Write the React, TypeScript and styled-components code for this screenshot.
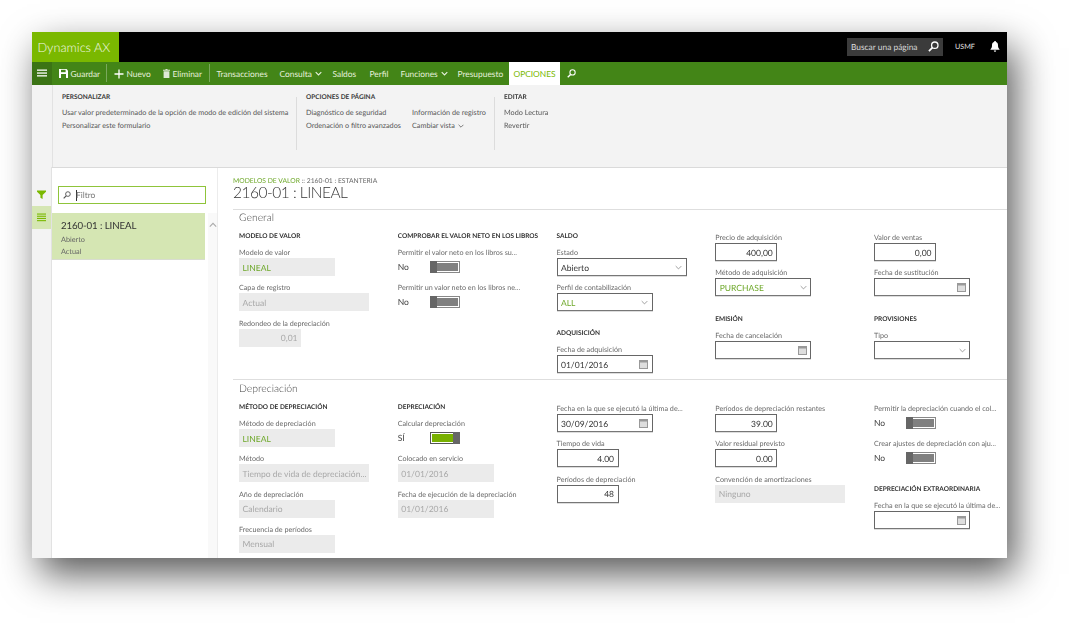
import React from "react";
import styled, { createGlobalStyle } from "styled-components";

const Global = createGlobalStyle`
  html, body { margin: 0; padding: 0; background: #fff; }
  body {
    font-family: Lato, "Open Sans", "Liberation Sans", sans-serif;
    text-rendering: geometricPrecision;
  }
  * { box-sizing: border-box; }
`;

const Page = styled.div`
  width: 1072px;
  height: 623px;
  padding: 32px 65px 65px 32px;
  overflow: hidden;
`;
const Win = styled.div`
  width: 975px;
  height: 526px;
  overflow: hidden;
  background: #fff;
  box-shadow: 8px 16px 36px rgba(0, 0, 0, 0.66);
  display: flex;
  flex-direction: column;
`;
const Crisp = styled.div`
  filter: blur(0.3px);
  display: flex;
  flex-direction: column;
  height: 100%;
`;

/* top bar */
const TopBar = styled.header`
  height: 29.5px;
  flex: none;
  background: #000;
  display: flex;
  align-items: center;
`;
const Logo = styled.div`
  width: 87px;
  height: 100%;
  background: #7ab800;
  color: #f4f9e8;
  font-size: 12.7px;
  font-weight: 300;
  line-height: 31px;
  padding-left: 5.5px;
`;
const SearchBox = styled.div`
  margin-left: auto;
  width: 96px;
  height: 18px;
  background: #3b3b3b;
  color: #d8d8d8;
  font-size: 8.4px;
  display: flex;
  align-items: center;
  justify-content: space-between;
  padding: 0 4px;
`;
const Company = styled.div`
  width: 47px;
  padding-left: 12px;
  color: #e4e4e4;
  font-size: 7.2px;
`;
const BellSlot = styled.div`
  width: 17px;
  display: flex;
`;

/* command bar */
const CommandBar = styled.nav`
  height: 23.5px;
  flex: none;
  background: #438517;
  display: flex;
  align-items: center;
  color: #e6f0dc;
  font-size: 8.4px;
`;
const MenuButton = styled.div`
  width: 20px;
  height: 100%;
  background: #3b7415;
  display: flex;
  align-items: center;
  justify-content: center;
`;
const Command = styled.div<{ $w: number }>`
  width: ${(p) => p.$w}px;
  height: 100%;
  flex: none;
  padding: 1px 0 0 6.5px;
  display: flex;
  align-items: center;
  gap: 3px;
  white-space: nowrap;
`;
const Divider = styled.div`
  width: 1px;
  height: 18px;
  flex: none;
  background: #7aa95c;
`;
const OptionsTab = styled.div`
  width: 51px;
  height: 100%;
  flex: none;
  padding-top: 1px;
  background: #fff;
  color: #7ab800;
  font-size: 8.4px;
  display: flex;
  align-items: center;
  justify-content: center;
`;

/* ribbon */
const Ribbon = styled.section`
  height: 82px;
  flex: none;
  background: #f3f3f3;
  display: flex;
`;
const RibbonStub = styled.div`
  width: 20px;
  flex: none;
`;
const RibbonBody = styled.div`
  flex: 1;
  border-left: 1px solid #e2e2e2;
  display: flex;
  padding-top: 8px;
`;
const RibbonGroup = styled.div<{ $w: number; $pl: number }>`
  width: ${(p) => p.$w}px;
  padding-left: ${(p) => p.$pl}px;
  flex: none;
`;
const RibbonSep = styled.div`
  width: 1px;
  height: 53px;
  margin-top: 4px;
  flex: none;
  background: #dcdcdc;
`;
const RibbonHead = styled.div`
  height: 10px;
  line-height: 10px;
  font-size: 6.5px;
  font-weight: 700;
  color: #3a3a3a;
  margin-bottom: 3px;
  white-space: nowrap;
`;
const RibbonCols = styled.div`
  display: flex;
`;
const RibbonCol = styled.div<{ $w?: number }>`
  width: ${(p) => (p.$w ? `${p.$w}px` : "auto")};
`;
const RibbonLink = styled.div`
  height: 13px;
  line-height: 13px;
  font-size: 7.25px;
  color: #555;
  white-space: nowrap;
  display: flex;
  align-items: center;
  gap: 3px;
`;

/* main */
const Body = styled.div`
  flex: 1;
  min-height: 0;
  display: flex;
`;
const Rail = styled.aside`
  width: 20px;
  flex: none;
  background: #f3f3f3;
  border-right: 1px solid #e2e2e2;
  padding-top: 16px;
`;
const RailButton = styled.div<{ $active?: boolean }>`
  height: 23px;
  display: flex;
  align-items: center;
  justify-content: center;
  background: ${(p) => (p.$active ? "#d5e6b3" : "transparent")};
`;
const Content = styled.div`
  flex: 1;
  display: flex;
  min-width: 0;
  border-top: 1px solid #dadada;
`;
const ListPane = styled.div`
  width: 166px;
  flex: none;
  border-right: 1px solid #ececec;
  display: flex;
  flex-direction: column;
`;
const FilterBox = styled.div`
  width: 148px;
  height: 18px;
  margin: 18px 0 9px 6px;
  border: 1px solid #8fc43a;
  display: flex;
  align-items: center;
  padding-left: 4px;
  font-size: 8.4px;
  color: #777;
  flex: none;
`;
const Caret = styled.span`
  width: 1px;
  height: 11px;
  background: #333;
  margin: 0 -1px 0 5px;
`;
const ListRow = styled.div`
  flex: 1;
  display: flex;
  gap: 3px;
`;
const ListColumn = styled.div`
  width: 153px;
  flex: none;
`;
const ListItem = styled.div`
  height: 47px;
  background: #d5e6b3;
  border-bottom: 1px solid #d8dcd0;
  padding: 5.5px 0 0 9px;
`;
const ItemTitle = styled.div`
  font-size: 9.7px;
  letter-spacing: -0.1px;
  line-height: 15px;
  color: #333;
  margin-bottom: 0;
  white-space: nowrap;
`;
const ItemLine = styled.div`
  font-size: 7.3px;
  line-height: 12px;
  color: #666;
`;
const ScrollColumn = styled.div`
  flex: 1;
  background: #f9f9f9;
  display: flex;
  justify-content: center;
  padding-top: 9px;
  align-items: flex-start;
`;

/* form */
const FormPane = styled.main`
  flex: 1;
  min-width: 0;
  padding-left: 15px;
`;
const FormHeader = styled.div`
  height: 41px;
  padding-top: 8px;
`;
const Crumb = styled.div`
  font-size: 6.75px;
  line-height: 10px;
  color: #666;
  white-space: nowrap;
`;
const CrumbLink = styled.span`
  color: #6ea82a;
`;
const Title = styled.h1`
  margin: -2px 0 0;
  font-size: 15.5px;
  letter-spacing: -0.5px;
  line-height: 18px;
  font-weight: 300;
  color: #333;
  white-space: nowrap;
`;
const Section = styled.section<{ $h: number }>`
  height: ${(p) => p.$h}px;
  border-top: 1px solid #dedede;
  padding-left: 6px;
  overflow: visible;
`;
const SectionTitle = styled.h2<{ $h: number; $lh: number }>`
  margin: 0;
  height: ${(p) => p.$h}px;
  line-height: ${(p) => p.$lh}px;
  font-size: 10.4px;
  font-weight: 300;
  color: #444;
`;
const Columns = styled.div`
  display: grid;
  grid-template-columns: repeat(5, 158.75px);
`;
const Column = styled.div`
  display: flex;
  flex-direction: column;
  align-items: flex-start;
  min-width: 0;
`;
const Heading = styled.div<{ $mt?: number }>`
  height: 10px;
  line-height: 12px;
  margin-top: ${(p) => p.$mt ?? 0}px;
  margin-bottom: 5px;
  font-size: 6.5px;
  font-weight: 700;
  color: #333;
  white-space: nowrap;
`;
const FieldBox = styled.div`
  margin-bottom: 5.3px;
`;
const Label = styled.div`
  height: 12px;
  line-height: 13.5px;
  font-size: 7.2px;
  color: #6a6a6a;
  white-space: nowrap;
`;
const Input = styled.div<{ $w: number; $right?: boolean; $link?: boolean }>`
  width: ${(p) => p.$w}px;
  height: 18px;
  border: 1px solid #666;
  border-bottom-color: #777;
  box-shadow: 0 1px 0 #ddd;
  background: #fff;
  padding: 1px 3.5px 0;
  display: flex;
  align-items: center;
  justify-content: ${(p) => (p.$right ? "flex-end" : "space-between")};
  font-size: 8.5px;
  color: ${(p) => (p.$link ? "#6ea82a" : "#333")};
`;
const ReadOnly = styled.div<{ $w: number; $right?: boolean; $link?: boolean }>`
  width: ${(p) => p.$w}px;
  height: 18px;
  background: #ebebeb;
  padding: 1px 3.5px 0;
  display: flex;
  align-items: center;
  justify-content: ${(p) => (p.$right ? "flex-end" : "flex-start")};
  font-size: 8.5px;
  white-space: nowrap;
  color: ${(p) => (p.$link ? "#6ea82a" : "#a8a8a8")};
`;
const ToggleRow = styled.div`
  height: 18px;
  display: flex;
  align-items: center;
  font-size: 8.5px;
  color: #444;
`;
const ToggleText = styled.span`
  width: 32px;
`;
const ToggleTrack = styled.span<{ $on?: boolean }>`
  width: 30px;
  height: 12px;
  border: 1px solid ${(p) => (p.$on ? "#555" : "#888")};
  padding: 1px;
  background: #fff;
  position: relative;
  display: block;
  &::before {
    content: "";
    display: block;
    height: 100%;
    background: ${(p) => (p.$on ? "#78b000" : "#808080")};
  }
  &::after {
    content: "";
    position: absolute;
    top: -1px;
    bottom: -1px;
    width: 7px;
    background: #666;
    ${(p) => (p.$on ? "right: -1px;" : "left: -1px;")}
  }
`;

/* icons */
const SearchIcon = ({ size = 10, color = "#fff" }: { size?: number; color?: string }) => (
  <svg width={size} height={size} viewBox="0 0 12 12" fill="none" stroke={color}>
    <circle cx="7.4" cy="4.6" r="3.5" strokeWidth="1.4" />
    <path d="M4.8 7.2 1 11" strokeWidth="1.8" />
  </svg>
);
const Chevron = ({ size = 7, color = "#e6f0dc", w = 1.3 }: { size?: number; color?: string; w?: number }) => (
  <svg width={size} height={size} viewBox="0 0 8 8" fill="none" stroke={color} strokeWidth={w}>
    <path d="M.8 2.4 4 5.6l3.2-3.2" />
  </svg>
);
const Calendar = () => (
  <svg width="9" height="9" viewBox="0 0 9 9">
    <rect x="0" y="0" width="9" height="9" fill="#999" />
    <rect x="1" y="2.5" width="7" height="5.5" fill="#dedede" />
  </svg>
);
const Bell = () => (
  <svg width="10" height="11" viewBox="0 0 10 11" fill="#fff">
    <path d="M5 0c.6 0 1 .4 1 .9C7.600 1.300 8 2.700 8 4.500c0 1.700.6 2.800 1.500 3.700v.6H.5v-.6C1.400 7.300 2 6.200 2 4.500 2 2.700 2.400 1.300 4 .9 4 .4 4.400 0 5 0zM3.800 9.400h2.400C6.100 10.200 5.600 10.700 5 10.700s-1.100-.5-1.200-1.300z" />
  </svg>
);
const Hamburger = () => (
  <svg width="10" height="8" viewBox="0 0 10 8" fill="#fff">
    <rect y="0.500" width="10" height="1.300" />
    <rect y="3.400" width="10" height="1.300" />
    <rect y="6.200" width="10" height="1.300" />
  </svg>
);
const SaveIcon = () => (
  <svg width="9" height="9" viewBox="0 0 9 9">
    <path d="M0 0h7.500L9 1.500V9H0z" fill="#fff" />
    <rect x="2" y="0.800" width="4.600" height="2.400" fill="#438517" />
    <rect x="2" y="5" width="5" height="4" fill="#438517" />
  </svg>
);
const PlusIcon = () => (
  <svg width="10" height="10" viewBox="0 0 10 10" stroke="#fff" strokeWidth="1.300">
    <path d="M5 .5v9M.5 5h9" />
  </svg>
);
const TrashIcon = () => (
  <svg width="7" height="9" viewBox="0 0 7 9" fill="#dfe9d6">
    <path d="M2.500 0h2v.8H7v1H0v-1h2.500zM.6 2.300h5.800V9H.6z" />
  </svg>
);
const Funnel = () => (
  <svg width="9" height="9" viewBox="0 0 9 9" fill="#7ab800">
    <path d="M0 .5h9v1.300L5.600 5v4L3.400 7.800V5L0 1.800z" />
  </svg>
);
const ListIcon = () => (
  <svg width="9" height="9" viewBox="0 0 9 9" fill="#7ab800">
    <rect y="0.500" width="9" height="1.100" />
    <rect y="2.700" width="9" height="1.100" />
    <rect y="4.900" width="9" height="1.100" />
    <rect y="7.100" width="9" height="1.100" />
  </svg>
);

/* field helpers */
const Field = ({ label, children }: { label: string; children: React.ReactNode }) => (
  <FieldBox>
    <Label>{label}</Label>
    {children}
  </FieldBox>
);
const Toggle = ({ label, value, on }: { label: string; value: string; on?: boolean }) => (
  <Field label={label}>
    <ToggleRow>
      <ToggleText>{value}</ToggleText>
      <ToggleTrack $on={on} />
    </ToggleRow>
  </Field>
);
const DateField = ({ label, value }: { label: string; value?: string }) => (
  <Field label={label}>
    <Input $w={96}>
      <span>{value}</span>
      <Calendar />
    </Input>
  </Field>
);
const SelectField = ({ label, value, w, link }: { label: string; value?: string; w: number; link?: boolean }) => (
  <Field label={label}>
    <Input $w={w} $link={link}>
      <span>{value}</span>
      <Chevron size={7} color="#777" w={0.8} />
    </Input>
  </Field>
);
const NumberField = ({ label, value }: { label: string; value: string }) => (
  <Field label={label}>
    <Input $w={62} $right>
      {value}
    </Input>
  </Field>
);
const Static = ({ label, value, w, link, right }: { label: string; value: string; w: number; link?: boolean; right?: boolean }) => (
  <Field label={label}>
    <ReadOnly $w={w} $link={link} $right={right}>
      {value}
    </ReadOnly>
  </Field>
);

export default function App() {
  return (
    <Page>
      <Global />
      <Win>
        <Crisp>
          <TopBar>
            <Logo>Dynamics AX</Logo>
            <SearchBox>
              <span>Buscar una página</span>
              <SearchIcon size={11} />
            </SearchBox>
            <Company>USMF</Company>
            <BellSlot>
              <Bell />
            </BellSlot>
          </TopBar>
          <CommandBar>
            <MenuButton>
              <Hamburger />
            </MenuButton>
            <Command $w={54}>
              <SaveIcon />
              Guardar
            </Command>
            <Divider />
            <Command $w={49}>
              <PlusIcon />
              Nuevo
            </Command>
            <Command $w={53}>
              <TrashIcon />
              Eliminar
            </Command>
            <Divider />
            <Command $w={63}>Transacciones</Command>
            <Command $w={53}>
              Consulta
              <Chevron />
            </Command>
            <Command $w={37}>Saldos</Command>
            <Command $w={31}>Perfil</Command>
            <Command $w={57}>
              Funciones
              <Chevron />
            </Command>
            <Command $w={58}>Presupuesto</Command>
            <OptionsTab>OPCIONES</OptionsTab>
            <Command $w={30}>
              <SearchIcon size={9} />
            </Command>
          </CommandBar>
          <Ribbon>
            <RibbonStub />
            <RibbonBody>
              <RibbonGroup $w={243} $pl={9}>
                <RibbonHead>PERSONALIZAR</RibbonHead>
                <RibbonLink>Usar valor predeterminado de la opción de modo de edición del sistema</RibbonLink>
                <RibbonLink>Personalizar este formulario</RibbonLink>
              </RibbonGroup>
              <RibbonSep />
              <RibbonGroup $w={197} $pl={9}>
                <RibbonHead>OPCIONES DE PÁGINA</RibbonHead>
                <RibbonCols>
                  <RibbonCol $w={106}>
                    <RibbonLink>Diagnóstico de seguridad</RibbonLink>
                    <RibbonLink>Ordenación o filtro avanzados</RibbonLink>
                  </RibbonCol>
                  <RibbonCol>
                    <RibbonLink>Información de registro</RibbonLink>
                    <RibbonLink>
                      Cambiar vista
                      <Chevron size={6} color="#555" w={1} />
                    </RibbonLink>
                  </RibbonCol>
                </RibbonCols>
              </RibbonGroup>
              <RibbonSep />
              <RibbonGroup $w={100} $pl={9}>
                <RibbonHead>EDITAR</RibbonHead>
                <RibbonLink>Modo Lectura</RibbonLink>
                <RibbonLink>Revertir</RibbonLink>
              </RibbonGroup>
            </RibbonBody>
          </Ribbon>
          <Body>
            <Rail>
              <RailButton>
                <Funnel />
              </RailButton>
              <RailButton $active>
                <ListIcon />
              </RailButton>
            </Rail>
            <Content>
              <ListPane>
                <FilterBox>
                  <SearchIcon size={8} color="#555" />
                  <Caret />
                  <span>Filtro</span>
                </FilterBox>
                <ListRow>
                  <ListColumn>
                    <ListItem>
                      <ItemTitle>2160-01 : LINEAL</ItemTitle>
                      <ItemLine>Abierto</ItemLine>
                      <ItemLine>Actual</ItemLine>
                    </ListItem>
                  </ListColumn>
                  <ScrollColumn>
                    <svg width="8" height="6" viewBox="0 0 8 6" fill="none" stroke="#aaa" strokeWidth="1.100">
                      <path d="M.8 4.600 4 1.400l3.200 3.200" />
                    </svg>
                  </ScrollColumn>
                </ListRow>
              </ListPane>
              <FormPane>
                <FormHeader>
                  <Crumb>
                    <CrumbLink>MODELOS DE VALOR</CrumbLink> :: 2160-01 : ESTANTERIA
                  </Crumb>
                  <Title>2160-01 : LINEAL</Title>
                </FormHeader>
                <Section $h={170}>
                  <SectionTitle $h={21} $lh={17}>General</SectionTitle>
                  <Columns>
                    <Column>
                      <Heading>MODELO DE VALOR</Heading>
                      <Static label="Modelo de valor" value="LINEAL" w={96} link />
                      <Static label="Capa de registro" value="Actual" w={130} />
                      <Static label="Redondeo de la depreciación" value="0,01" w={62} right />
                    </Column>
                    <Column>
                      <Heading>COMPROBAR EL VALOR NETO EN LOS LIBROS</Heading>
                      <Toggle label="Permitir el valor neto en los libros su..." value="No" />
                      <Toggle label="Permitir un valor neto en los libros ne..." value="No" />
                    </Column>
                    <Column>
                      <Heading>SALDO</Heading>
                      <SelectField label="Estado" value="Abierto" w={130} />
                      <SelectField label="Perfil de contabilización" value="ALL" w={96} link />
                      <Heading $mt={11.5}>ADQUISICIÓN</Heading>
                      <DateField label="Fecha de adquisición" value="01/01/2016" />
                    </Column>
                    <Column>
                      <NumberField label="Precio de adquisición" value="400,00" />
                      <SelectField label="Método de adquisición" value="PURCHASE" w={96} link />
                      <Heading $mt={12}>EMISIÓN</Heading>
                      <DateField label="Fecha de cancelación" />
                    </Column>
                    <Column>
                      <NumberField label="Valor de ventas" value="0,00" />
                      <DateField label="Fecha de sustitución" />
                      <Heading $mt={12}>PROVISIONES</Heading>
                      <SelectField label="Tipo" w={96} />
                    </Column>
                  </Columns>
                </Section>
                <Section $h={180}>
                  <SectionTitle $h={22} $lh={18}>Depreciación</SectionTitle>
                  <Columns>
                    <Column>
                      <Heading>MÉTODO DE DEPRECIACIÓN</Heading>
                      <Static label="Método de depreciación" value="LINEAL" w={96} link />
                      <Static label="Método" value="Tiempo de vida de depreciación..." w={130} />
                      <Static label="Año de depreciación" value="Calendario" w={96} />
                      <Static label="Frecuencia de períodos" value="Mensual" w={96} />
                    </Column>
                    <Column>
                      <Heading>DEPRECIACIÓN</Heading>
                      <Toggle label="Calcular depreciación" value="SÍ" on />
                      <Static label="Colocado en servicio" value="01/01/2016" w={96} />
                      <Static label="Fecha de ejecución de la depreciación" value="01/01/2016" w={96} />
                    </Column>
                    <Column>
                      <DateField label="Fecha en la que se ejecutó la última de..." value="30/09/2016" />
                      <NumberField label="Tiempo de vida" value="4.00" />
                      <NumberField label="Períodos de depreciación" value="48" />
                    </Column>
                    <Column>
                      <NumberField label="Períodos de depreciación restantes" value="39.00" />
                      <NumberField label="Valor residual previsto" value="0.00" />
                      <Static label="Convención de amortizaciones" value="Ninguno" w={130} />
                    </Column>
                    <Column>
                      <Toggle label="Permitir la depreciación cuando el col..." value="No" />
                      <Toggle label="Crear ajustes de depreciación con aju..." value="No" />
                      <Heading $mt={11.4}>DEPRECIACIÓN EXTRAORDINARIA</Heading>
                      <DateField label="Fecha en la que se ejecutó la última de..." />
                    </Column>
                  </Columns>
                </Section>
              </FormPane>
            </Content>
          </Body>
        </Crisp>
      </Win>
    </Page>
  );
}
